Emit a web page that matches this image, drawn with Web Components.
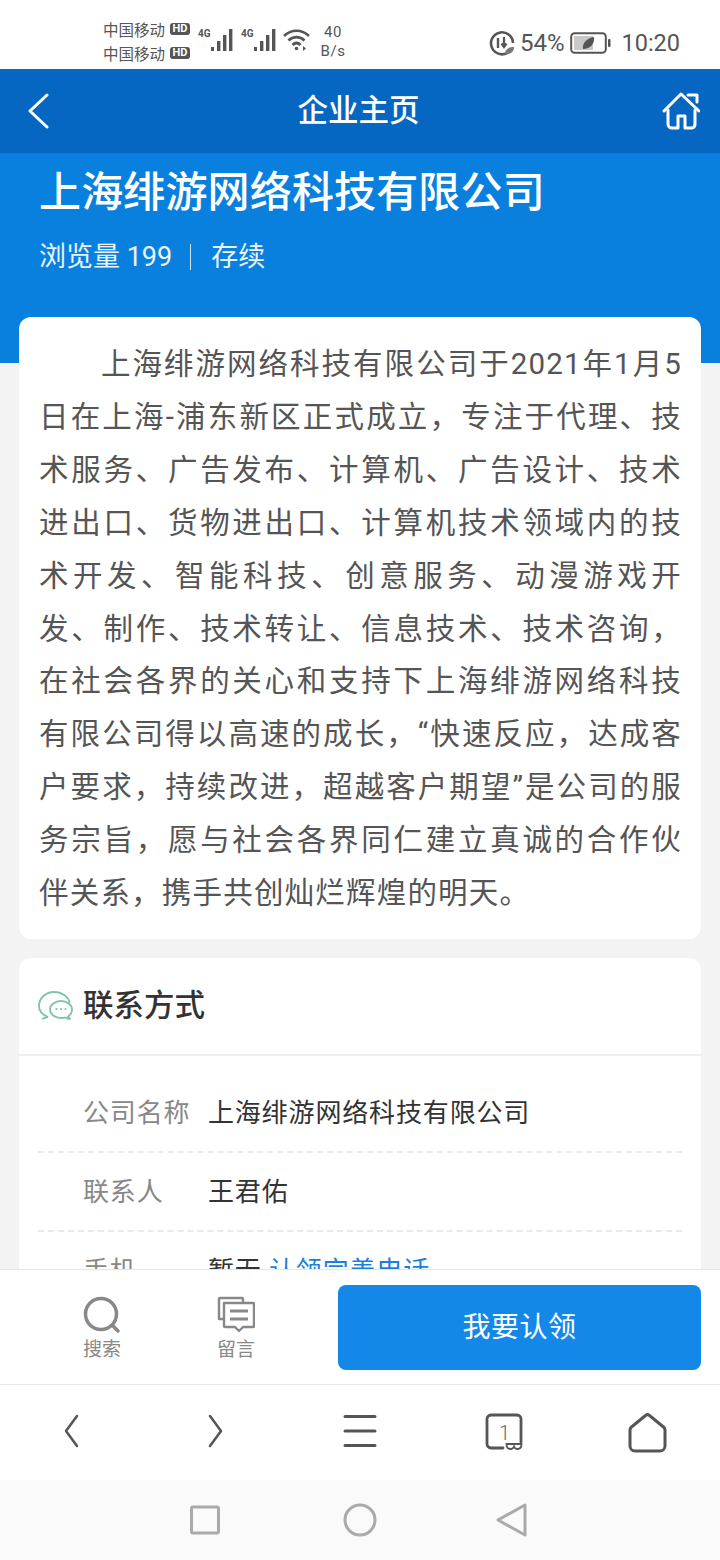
<!DOCTYPE html>
<html lang="zh">
<head>
<meta charset="utf-8">
<title>企业主页</title>
<style>
html,body{margin:0;padding:0;}
body{width:720px;height:1560px;overflow:hidden;background:#f3f3f3;font-family:Roboto,"Noto Sans CJK SC",sans-serif;}
.page{display:flex;flex-direction:column;height:1560px;}
.scroll{flex:1;min-height:0;overflow:hidden;}
</style>
</head>
<body>
<div class="page">
  <status-bar></status-bar>
  <app-header>企业主页</app-header>
  <div class="scroll">
    <company-hero name="上海绯游网络科技有限公司" views="浏览量 199" state="存续"></company-hero>
    <intro-card>上海绯游网络科技有限公司于2021年1月5日在上海-浦东新区正式成立，专注于代理、技术服务、广告发布、计算机、广告设计、技术进出口、货物进出口、计算机技术领域内的技术开发、智能科技、创意服务、动漫游戏开发、制作、技术转让、信息技术、技术咨询，在社会各界的关心和支持下上海绯游网络科技有限公司得以高速的成长，“快速反应，达成客户要求，持续改进，超越客户期望”是公司的服务宗旨，愿与社会各界同仁建立真诚的合作伙伴关系，携手共创灿烂辉煌的明天。</intro-card>
    <contact-card title="联系方式">
      <contact-row label="公司名称">上海绯游网络科技有限公司</contact-row>
      <contact-row label="联系人">王君佑</contact-row>
      <contact-row label="手机">暂无 <a style="color:#1a7fe0;text-decoration:none">认领完善电话</a></contact-row>
    </contact-card>
  </div>
  <action-bar></action-bar>
  <browser-bar></browser-bar>
  <nav-bar></nav-bar>
</div>
<script>
class StatusBar extends HTMLElement {
    constructor() {
        super();
        this.attachShadow({ mode: 'open' });
    }
    signal() {
        return `<div class="sig"><span class="g">4G</span><svg width="24" height="24" viewBox="0 0 24 24" fill="#555">
            <rect x="1" y="19" width="3" height="4"/><rect x="7" y="13" width="3.400" height="10"/><rect x="13" y="7" width="3.400" height="16"/><rect x="19" y="1" width="3.400" height="22"/></svg></div>`;
    }
    connectedCallback() {
        this.shadowRoot.innerHTML = `
        <style>
        :host{display:flex;align-items:center;height:69px;background:#fff;color:#555;padding:13px 40px 0 103px;box-sizing:border-box;font-family:Roboto,"Noto Sans CJK SC",sans-serif;}
        .ops{display:flex;flex-direction:column;gap:4px;width:95px;}
        .op{display:flex;align-items:center;gap:5px;font-size:15.500px;line-height:20px;font-family:"Noto Sans CJK SC",sans-serif;}
        .hd{width:20px;height:12px;border-radius:3px;background:#555;color:#fff;font:bold 11px/12px Roboto,sans-serif;text-align:center;}
        .sig{display:flex;align-items:flex-start;margin-right:7px;height:26px;}
        .g{font:bold 10px/12px Roboto,sans-serif;width:12px;}
        .wifi{margin:-2px 9px 0 -2px;}
        .speed{font-size:15px;line-height:19px;text-align:center;letter-spacing:.5px;width:26px;margin-top:1px;}
        .right{margin-left:auto;display:flex;align-items:center;margin-top:3px;}
        .pct{font-size:24px;margin:0 6px 0 5px;}
        .time{font-size:23.500px;margin-left:10px;}
        </style>
        <div class="ops">
            <div class="op">中国移动<span class="hd">HD</span></div>
            <div class="op">中国移动<span class="hd">HD</span></div>
        </div>
        ${this.signal()}${this.signal()}
        <svg class="wifi" width="29" height="24" viewBox="0 0 29 24" fill="none" stroke="#555" stroke-width="2.600">
            <path d="M2 8C9 1 20 1 27 8"/><path d="M6.500 12.500C11 8 18 8 22.500 12.500"/><path d="M10.500 17C13 14.500 16 14.500 18.500 17"/>
            <circle cx="14.500" cy="20.500" r="1.800" fill="#555" stroke="none"/>
            <path d="M21 18v5l3-2.500z" fill="#555" stroke="none"/>
        </svg>
        <div class="speed">40<br>B/s</div>
        <div class="right">
            <svg width="26" height="26" viewBox="0 0 26 26" fill="none" stroke="#555" stroke-width="2.600">
                <path d="M20 21.800A11 11 0 1 1 24 13"/>
                <path d="M9 8v10" stroke-width="2.400"/><path d="M15 7v9M12.500 13.500L15 17l2.500-3.500" stroke-width="2.200"/>
                <path d="M16 24c0-5 4-7 9-7 0 5-4 8-9 7z" fill="#777" stroke="none"/>
            </svg>
            <span class="pct">54%</span>
            <svg width="41" height="22" viewBox="0 0 41 22" fill="none">
                <rect x="1.200" y="1.200" width="34.600" height="19.600" rx="3.500" stroke="#555" stroke-width="2"/>
                <rect x="4" y="4" width="19" height="14" fill="#c8c8c8"/>
                <path d="M13 17c-1-6 4-11 11-12 1 7-4 12-11 12z" fill="#555"/>
                <rect x="38" y="7" width="2.500" height="8" rx="1" fill="#555"/>
            </svg>
            <span class="time">10:20</span>
        </div>`;
    }
}
customElements.define('status-bar', StatusBar);

class AppHeader extends HTMLElement {
    constructor() {
        super();
        this.attachShadow({ mode: 'open' });
    }
    connectedCallback() {
        this.shadowRoot.innerHTML = `
        <style>
        :host{display:flex;align-items:center;justify-content:space-between;height:84px;background:#0667c3;color:#fff;padding:0 20px 0 27px;box-sizing:border-box;}
        .title{font-size:30.500px;font-weight:500;line-height:84px;margin-left:6px;}
        </style>
        <svg width="22" height="36" viewBox="0 0 22 36" fill="none" stroke="#fff" stroke-width="3" stroke-linecap="round" stroke-linejoin="round"><path d="M20 2L3 18l17 16"/></svg>
        <div class="title"><slot></slot></div>
        <svg width="38" height="40" viewBox="0 0 38 40" fill="none" stroke="#fff" stroke-width="3" stroke-linecap="round" stroke-linejoin="round">
            <path d="M2 20L19 3l18 17"/><path d="M26 4h9v7"/>
            <path d="M6 19v14a4 4 0 0 0 4 4h6V25h7v12h7a4 4 0 0 0 3-4V19"/>
        </svg>`;
    }
}
customElements.define('app-header', AppHeader);

class CompanyHero extends HTMLElement {
    constructor() {
        super();
        this.attachShadow({ mode: 'open' });
    }
    connectedCallback() {
        this.shadowRoot.innerHTML = `
        <style>
        :host{display:block;height:210px;background:#0a80de;color:#fff;padding:12px 39px 0;box-sizing:border-box;}
        h1{margin:0;font-size:42px;letter-spacing:.15px;line-height:56px;font-weight:500;}
        .meta{display:flex;align-items:center;margin-top:18px;font-size:27px;line-height:36px;color:#e8f3fd;}
        .sep{width:1px;height:26px;background:#cfe6f9;margin:0 20px 0 18px;}
        </style>
        <h1>${this.getAttribute('name')}</h1>
        <div class="meta"><span>${this.getAttribute('views')}</span><span class="sep"></span><span>${this.getAttribute('state')}</span></div>`;
    }
}
customElements.define('company-hero', CompanyHero);

class IntroCard extends HTMLElement {
    constructor() {
        super();
        this.attachShadow({ mode: 'open' });
    }
    connectedCallback() {
        this.shadowRoot.innerHTML = `
        <style>
        :host{display:block;position:relative;margin:-46px 19px 19px;padding:21px 19px 19px 20px;background:#fff;border-radius:12px;color:#555;}
        p{margin:0;font-size:29.500px;letter-spacing:1.200px;line-height:52.900px;text-indent:62px;text-align:justify;}
        </style>
        <p><slot></slot></p>`;
    }
}
customElements.define('intro-card', IntroCard);

class ContactCard extends HTMLElement {
    constructor() {
        super();
        this.attachShadow({ mode: 'open' });
    }
    connectedCallback() {
        this.shadowRoot.innerHTML = `
        <style>
        :host{display:block;margin:0 19px;background:#fff;border-radius:12px 12px 0 0;}
        .head{display:flex;align-items:center;gap:10px;height:96px;padding-left:19px;border-bottom:2px solid #eee;font-size:30.500px;font-weight:500;color:#333;}
        .head span{margin-bottom:6px;}
        .rows{padding:18px 19px 0;}
        </style>
        <div class="head">
            <svg width="35" height="30" viewBox="0 0 35 30" fill="none" stroke="#7cc4a4" stroke-width="1.800">
                <path d="M6 27c2 0 3-1 4-1-5-2-9-6-9-11C1 7 8 1 16 1s15 5 15.500 11"/>
                <path d="M6 27l-2 1"/>
                <path d="M23 10c6 0 11 4 11 8.500 0 3-1.500 5.500-4 7 .5 1 1.500 2 2.500 2.500-2 0-4-.5-5.500-1.500-1.200.3-2.500.5-4 .5-6 0-11-4-11-8.500S17 10 23 10z"/>
                <g fill="#7cc4a4" stroke="none"><circle cx="18.500" cy="18" r="1.100"/><circle cx="23" cy="18" r="1.100"/><circle cx="27.500" cy="18" r="1.100"/></g>
            </svg>
            <span>${this.getAttribute('title')}</span>
        </div>
        <div class="rows"><slot></slot></div>`;
    }
}
customElements.define('contact-card', ContactCard);

class ContactRow extends HTMLElement {
    constructor() {
        super();
        this.attachShadow({ mode: 'open' });
    }
    connectedCallback() {
        this.shadowRoot.innerHTML = `
        <style>
        :host{display:flex;align-items:center;height:79px;box-sizing:border-box;padding:0 0 3px 45px;border-bottom:2px dashed #eaeaea;font-size:26px;letter-spacing:.85px;color:#333;}
        .label{width:125px;flex:none;color:#888;}
        </style>
        <span class="label">${this.getAttribute('label')}</span><span><slot></slot></span>`;
    }
}
customElements.define('contact-row', ContactRow);

class ActionBar extends HTMLElement {
    constructor() {
        super();
        this.attachShadow({ mode: 'open' });
    }
    connectedCallback() {
        this.shadowRoot.innerHTML = `
        <style>
        :host{display:flex;align-items:center;flex:none;height:116px;box-sizing:border-box;background:#fff;border-top:1px solid #e6e6e6;border-bottom:1px solid #e6e6e6;padding:0 19px 0 35px;}
        .tab{width:134px;display:flex;flex-direction:column;align-items:center;font-size:19px;line-height:24px;color:#888;padding-top:4px;}
        .tab svg{display:block;margin-bottom:4px;}
        button{margin-left:35px;flex:1;height:85px;padding:0 0 4px;border:0;border-radius:8px;background:#1488e8;color:#fff;font:400 28px "Noto Sans CJK SC",sans-serif;letter-spacing:.5px;}
        </style>
        <div class="tab">
            <svg width="38" height="38" viewBox="0 0 38 38" fill="none" stroke="#888" stroke-width="3.500" stroke-linecap="round"><circle cx="18" cy="18" r="15.500"/><path d="M29.500 29.500L35 35"/></svg>
            搜索
        </div>
        <div class="tab">
            <svg width="38" height="38" viewBox="0 0 38 38" fill="none" stroke="#888" stroke-width="2.400" stroke-linejoin="round">
                <path d="M6 23H2V3a1 1 0 0 1 1-1h22a1 1 0 0 1 1 1v3"/>
                <path d="M7 7h29a1 1 0 0 1 1 1v22a1 1 0 0 1-1 1H26l-4 4-4-4H8a1 1 0 0 1-1-1z"/>
                <path d="M13 15h18M13 23h18" stroke-width="2.800"/>
            </svg>
            留言
        </div>
        <button>我要认领</button>`;
    }
}
customElements.define('action-bar', ActionBar);

class BrowserBar extends HTMLElement {
    constructor() {
        super();
        this.attachShadow({ mode: 'open' });
    }
    connectedCallback() {
        this.shadowRoot.innerHTML = `
        <style>
        :host{display:grid;flex:none;grid-template-columns:repeat(5,144px);place-items:center;height:95px;box-sizing:border-box;padding-bottom:4px;background:#fff;}
        svg{display:block;}
        .home{margin-top:5px;}
        </style>
        <svg width="40" height="40" viewBox="0 0 40 40" fill="none" stroke="#555" stroke-width="2.500" stroke-linecap="round" stroke-linejoin="round"><path d="M25 5L14 20l11 15"/></svg>
        <svg width="40" height="40" viewBox="0 0 40 40" fill="none" stroke="#555" stroke-width="2.500" stroke-linecap="round" stroke-linejoin="round"><path d="M14 5l11 15-11 15"/></svg>
        <svg width="40" height="40" viewBox="0 0 40 40" fill="none" stroke="#555" stroke-width="3" stroke-linecap="round"><path d="M5 5.500h30M5 20h30M5 34.500h30"/></svg>
        <svg width="40" height="40" viewBox="0 0 40 40" fill="none" stroke="#555" stroke-width="2.800" stroke-linecap="round">
            <path d="M19 37H7a4 4 0 0 1-4-4V8a4 4 0 0 1 4-4h26a4 4 0 0 1 4 4v23"/>
            <text x="15" y="29" font-family="Roboto,sans-serif" font-size="20" font-weight="300" fill="#666" stroke="none">1</text>
            <path d="M22.500 33h15c0 3-1.500 5-4 5-1.500 0-3-1-3.500-2.500-.5 1.500-2 2.500-3.500 2.500-2.500 0-4-2-4-5z" fill="none" stroke-width="1.800"/>
        </svg>
        <svg class="home" width="40" height="42" viewBox="0 0 40 42" fill="none" stroke="#555" stroke-width="3" stroke-linejoin="round"><path d="M17.500 3.500a3 3 0 0 1 4 0L35.500 15a4 4 0 0 1 1.500 3v16a5 5 0 0 1-5 5H7a5 5 0 0 1-5-5V18a4 4 0 0 1 1.500-3z"/></svg>`;
    }
}
customElements.define('browser-bar', BrowserBar);

class NavBar extends HTMLElement {
    constructor() {
        super();
        this.attachShadow({ mode: 'open' });
    }
    connectedCallback() {
        this.shadowRoot.innerHTML = `
        <style>
        :host{display:flex;align-items:center;justify-content:center;flex:none;height:80px;background:#fafafa;padding-right:3px;}
        svg{display:block;}
        .mid{margin:0 119px 0 122px;}
        </style>
        <svg width="32" height="32" viewBox="0 0 32 32" fill="none" stroke="#aaa" stroke-width="3" stroke-linejoin="round"><rect x="2.500" y="3" width="27" height="26" rx="1.500"/></svg>
        <svg class="mid" width="34" height="34" viewBox="0 0 34 34" fill="none" stroke="#aaa" stroke-width="3"><circle cx="17" cy="17" r="15"/></svg>
        <svg width="32" height="34" viewBox="0 0 32 34" fill="none" stroke="#aaa" stroke-width="3" stroke-linejoin="round"><path d="M29 2L2 17l27 15z"/></svg>`;
    }
}
customElements.define('nav-bar', NavBar);
</script>
</body>
</html>
